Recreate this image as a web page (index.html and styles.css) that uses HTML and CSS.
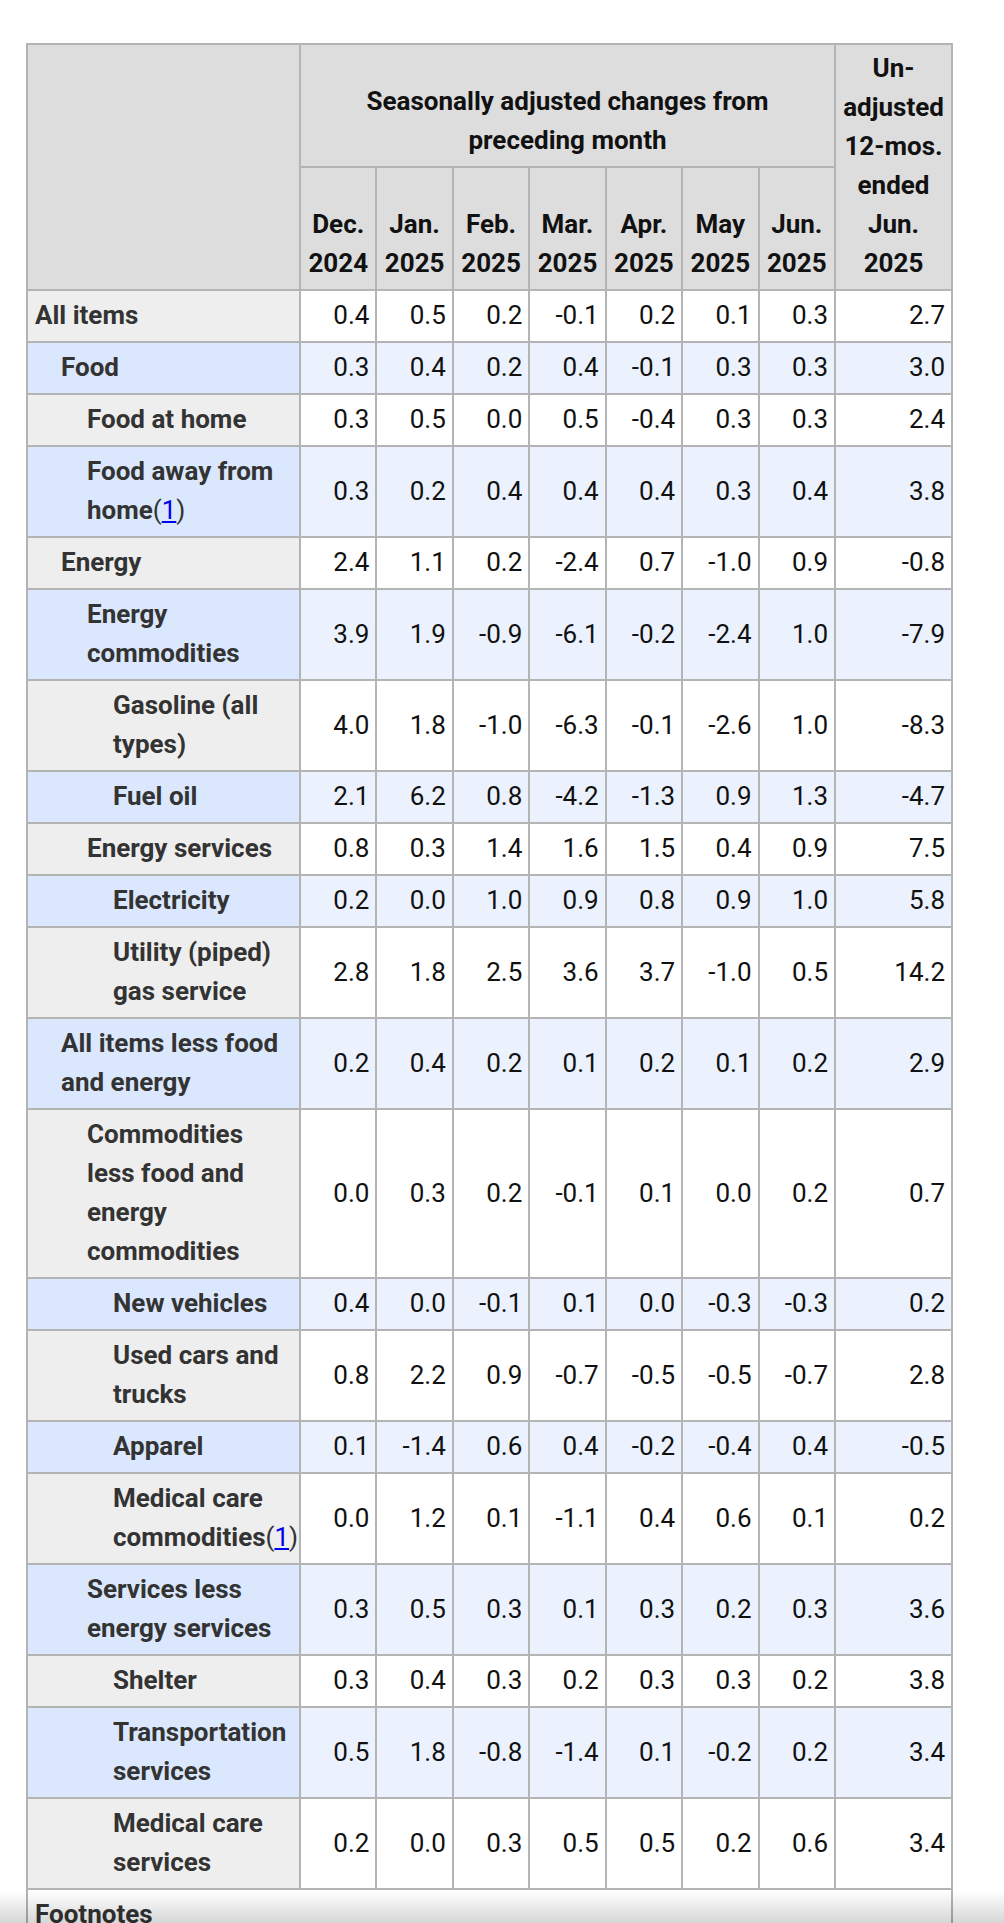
FILE: index.html
```html
<!DOCTYPE html>
<html lang="en">
<head>
<meta charset="utf-8">
<title>CPI table</title>
<link rel="stylesheet" href="styles.css">
</head>
<body>
<div class="page">
  <table class="cpi">
    <colgroup>
      <col class="c-item">
      <col class="c-m"><col class="c-m"><col class="c-m"><col class="c-m"><col class="c-m"><col class="c-m"><col class="c-m">
      <col class="c-12">
    </colgroup>
    <thead>
      <tr>
        <th rowspan="2" class="corner"></th>
        <th colspan="7" class="grp">Seasonally adjusted changes from preceding month</th>
        <th rowspan="2" class="un">Un-<br>adjusted<br>12-mos.<br>ended<br>Jun.<br>2025</th>
      </tr>
      <tr>
        <th class="mh">Dec.<br>2024</th>
        <th class="mh">Jan.<br>2025</th>
        <th class="mh">Feb.<br>2025</th>
        <th class="mh">Mar.<br>2025</th>
        <th class="mh">Apr.<br>2025</th>
        <th class="mh">May<br>2025</th>
        <th class="mh">Jun.<br>2025</th>
      </tr>
    </thead>
    <tbody>
      <tr><th class="l0">All items</th><td>0.4</td><td>0.5</td><td>0.2</td><td>-0.1</td><td>0.2</td><td>0.1</td><td>0.3</td><td>2.7</td></tr>
      <tr><th class="l1">Food</th><td>0.3</td><td>0.4</td><td>0.2</td><td>0.4</td><td>-0.1</td><td>0.3</td><td>0.3</td><td>3.0</td></tr>
      <tr><th class="l2">Food at home</th><td>0.3</td><td>0.5</td><td>0.0</td><td>0.5</td><td>-0.4</td><td>0.3</td><td>0.3</td><td>2.4</td></tr>
      <tr><th class="l2">Food away from home<span class="fn">(<a href="#fn1">1</a>)</span></th><td>0.3</td><td>0.2</td><td>0.4</td><td>0.4</td><td>0.4</td><td>0.3</td><td>0.4</td><td>3.8</td></tr>
      <tr><th class="l1">Energy</th><td>2.4</td><td>1.1</td><td>0.2</td><td>-2.4</td><td>0.7</td><td>-1.0</td><td>0.9</td><td>-0.8</td></tr>
      <tr><th class="l2">Energy commodities</th><td>3.9</td><td>1.9</td><td>-0.9</td><td>-6.1</td><td>-0.2</td><td>-2.4</td><td>1.0</td><td>-7.9</td></tr>
      <tr><th class="l3">Gasoline (all types)</th><td>4.0</td><td>1.8</td><td>-1.0</td><td>-6.3</td><td>-0.1</td><td>-2.6</td><td>1.0</td><td>-8.3</td></tr>
      <tr><th class="l3">Fuel oil</th><td>2.1</td><td>6.2</td><td>0.8</td><td>-4.2</td><td>-1.3</td><td>0.9</td><td>1.3</td><td>-4.7</td></tr>
      <tr><th class="l2">Energy services</th><td>0.8</td><td>0.3</td><td>1.4</td><td>1.6</td><td>1.5</td><td>0.4</td><td>0.9</td><td>7.5</td></tr>
      <tr><th class="l3">Electricity</th><td>0.2</td><td>0.0</td><td>1.0</td><td>0.9</td><td>0.8</td><td>0.9</td><td>1.0</td><td>5.8</td></tr>
      <tr><th class="l3">Utility (piped) gas service</th><td>2.8</td><td>1.8</td><td>2.5</td><td>3.6</td><td>3.7</td><td>-1.0</td><td>0.5</td><td>14.2</td></tr>
      <tr><th class="l1">All items less food and energy</th><td>0.2</td><td>0.4</td><td>0.2</td><td>0.1</td><td>0.2</td><td>0.1</td><td>0.2</td><td>2.9</td></tr>
      <tr><th class="l2">Commodities less food and energy commodities</th><td>0.0</td><td>0.3</td><td>0.2</td><td>-0.1</td><td>0.1</td><td>0.0</td><td>0.2</td><td>0.7</td></tr>
      <tr><th class="l3">New vehicles</th><td>0.4</td><td>0.0</td><td>-0.1</td><td>0.1</td><td>0.0</td><td>-0.3</td><td>-0.3</td><td>0.2</td></tr>
      <tr><th class="l3">Used cars and trucks</th><td>0.8</td><td>2.2</td><td>0.9</td><td>-0.7</td><td>-0.5</td><td>-0.5</td><td>-0.7</td><td>2.8</td></tr>
      <tr><th class="l3">Apparel</th><td>0.1</td><td>-1.4</td><td>0.6</td><td>0.4</td><td>-0.2</td><td>-0.4</td><td>0.4</td><td>-0.5</td></tr>
      <tr><th class="l3">Medical care commodities<span class="fn">(<a href="#fn1">1</a>)</span></th><td>0.0</td><td>1.2</td><td>0.1</td><td>-1.1</td><td>0.4</td><td>0.6</td><td>0.1</td><td>0.2</td></tr>
      <tr><th class="l2">Services less energy services</th><td>0.3</td><td>0.5</td><td>0.3</td><td>0.1</td><td>0.3</td><td>0.2</td><td>0.3</td><td>3.6</td></tr>
      <tr><th class="l3">Shelter</th><td>0.3</td><td>0.4</td><td>0.3</td><td>0.2</td><td>0.3</td><td>0.3</td><td>0.2</td><td>3.8</td></tr>
      <tr><th class="l3">Transportation services</th><td>0.5</td><td>1.8</td><td>-0.8</td><td>-1.4</td><td>0.1</td><td>-0.2</td><td>0.2</td><td>3.4</td></tr>
      <tr><th class="l3">Medical care services</th><td>0.2</td><td>0.0</td><td>0.3</td><td>0.5</td><td>0.5</td><td>0.2</td><td>0.6</td><td>3.4</td></tr>
    </tbody>
    <tfoot>
      <tr>
        <td colspan="9" class="foot">
          <p class="foot-title">Footnotes</p>
          <p class="foot-note" id="fn1">(1) Not seasonally adjusted.</p>
        </td>
      </tr>
    </tfoot>
  </table>
</div>
<div class="fade"></div>
</body>
</html>
```

FILE: styles.css
```css
html, body {
  margin: 0;
  padding: 0;
  background: #ffffff;
}

body {
  font-family: Roboto, "Liberation Sans", Arial, sans-serif;
  font-size: 26px;
  line-height: 39px;
  color: #111111;
}

.page {
  padding: 43px 0 40px 26px;
}

.cpi {
  width: 927px;
  table-layout: fixed;
  border-collapse: separate;
  border-spacing: 0;
  border-top: 2px solid #b4b4b4;
  border-left: 2px solid #b4b4b4;
}

.c-item { width: 273px; }
.c-m { width: 76.43px; }
.c-12 { width: 117px; }

.cpi th,
.cpi td {
  border-right: 2px solid #b4b4b4;
  border-bottom: 2px solid #b4b4b4;
  padding: 5px 6px 6px 6px;
}

.cpi thead th {
  background: #dddddd;
  color: #111111;
  font-weight: 700;
  text-align: center;
  vertical-align: bottom;
}

.cpi thead th.un {
  vertical-align: middle;
  padding-top: 4px;
}

.cpi tbody th {
  font-weight: 700;
  color: #333333;
  text-align: left;
  vertical-align: middle;
  background: #eeeeee;
}

.cpi tbody td {
  text-align: right;
  vertical-align: middle;
  background: #ffffff;
  color: #111111;
  padding-right: 6px;
}

.cpi tbody tr:nth-child(even) th {
  background: #dae7fc;
}

.cpi tbody tr:nth-child(even) td {
  background: #ebf2fe;
}

.cpi tbody th.l0 { padding-left: 7px; }
.cpi tbody th.l1 { padding-left: 33px; }
.cpi tbody th.l2 { padding-left: 59px; }
.cpi tbody th.l3 { padding-left: 85px; }

.fn {
  font-weight: 400;
  color: #333333;
}

.fn a {
  color: #0000ee;
  text-decoration: underline;
}

.cpi tfoot td.foot {
  text-align: left;
  background: #ffffff;
  padding: 5px 7px 6px 7px;
}

.foot-title {
  margin: 0;
  font-weight: 700;
  color: #333333;
}

.foot-note {
  margin: 0;
  color: #111111;
}

.fade {
  position: fixed;
  left: 0;
  right: 0;
  bottom: 0;
  height: 32px;
  background: linear-gradient(to bottom, rgba(0, 0, 0, 0), rgba(0, 0, 0, 0.16));
  pointer-events: none;
}
```
